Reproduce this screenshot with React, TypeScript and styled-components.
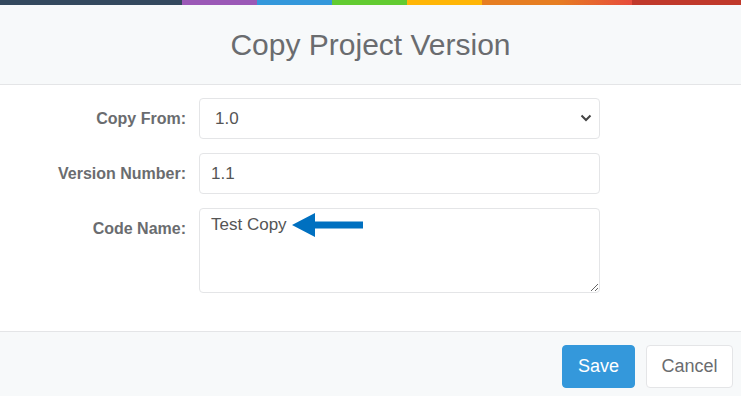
import * as React from "react";
import styled, { createGlobalStyle } from "styled-components";

const GlobalStyle = createGlobalStyle`
  html, body {
    margin: 0;
    padding: 0;
    background: #fff;
    font-family: "Liberation Sans", Arial, sans-serif;
  }
`;

const stripe = [
  { color: "#34495e", width: 182 },
  { color: "#9b59b6", width: 75 },
  { color: "#3498db", width: 75 },
  { color: "#62cb31", width: 75 },
  { color: "#ffb606", width: 75 },
  { color: "linear-gradient(to right, #e67e22 0%, #e67e22 50%, #e74c3c 100%)", width: 150 },
  { color: "#c0392b", width: 109 },
];

const Modal = styled.div`
  width: 741px;
  height: 396px;
  display: flex;
  flex-direction: column;
  overflow: hidden;
`;

const ColorBar = styled.div`
  display: flex;
  height: 5px;
`;

const ColorSegment = styled.div<{ $bg: string; $w: number }>`
  flex: 0 0 ${(p) => p.$w}px;
  background: ${(p) => p.$bg};
`;

const Header = styled.div`
  height: 79px;
  background: #f7f9fa;
  border-bottom: 1px solid #e4e5e7;
  display: flex;
  align-items: center;
  justify-content: center;
`;

const Title = styled.h4`
  margin: 0;
  font-size: 30px;
  font-weight: 400;
  color: #6a6c6f;
`;

const Body = styled.div`
  flex: 1;
  padding: 13px 0 0;
  display: flex;
  flex-direction: column;
  gap: 14px;
`;

const Row = styled.div`
  display: grid;
  grid-template-columns: 186px 401px;
  column-gap: 13px;
  align-items: start;
`;

const Label = styled.label`
  text-align: right;
  font-weight: 700;
  font-size: 16px;
  color: #6a6c6f;
  padding-top: 12px;
`;

const fieldBase = `
  box-sizing: border-box;
  width: 401px;
  border: 1px solid #e4e5e7;
  border-radius: 4px;
  background: #fff;
  font-family: "Liberation Sans", Arial, sans-serif;
  font-size: 17px;
  color: #555;
  outline: none;
`;

const SelectWrap = styled.div`
  position: relative;
  width: 401px;
`;

const Select = styled.select`
  ${fieldBase}
  height: 41px;
  padding: 0 12px 0 15px;
  appearance: none;
  -webkit-appearance: none;
`;

const Chevron = styled.svg`
  position: absolute;
  right: 7px;
  top: 15px;
  pointer-events: none;
`;

const Input = styled.input`
  ${fieldBase}
  height: 41px;
  padding: 0 11px;
`;

const TextWrap = styled.div`
  position: relative;
  width: 401px;
`;

const TextArea = styled.textarea`
  ${fieldBase}
  display: block;
  height: 85px;
  padding: 6px 11px;
  resize: vertical;
  line-height: 20px;
`;

const Arrow = styled.svg`
  position: absolute;
  left: 93px;
  top: 4px;
  pointer-events: none;
`;

const Footer = styled.div`
  height: 65px;
  box-sizing: border-box;
  background: #f7f9fa;
  border-top: 1px solid #e4e5e7;
  display: flex;
  align-items: flex-start;
  justify-content: flex-end;
  gap: 11px;
  padding: 13px 8px 0 0;
`;

const Button = styled.button<{ $primary?: boolean; $w: number }>`
  width: ${(p) => p.$w}px;
  height: 43px;
  padding: 0;
  border-radius: 4px;
  font-family: "Liberation Sans", Arial, sans-serif;
  font-size: 18px;
  cursor: pointer;
  border: 1px solid ${(p) => (p.$primary ? "#3498db" : "#e4e5e7")};
  background: ${(p) => (p.$primary ? "#3498db" : "#fff")};
  color: ${(p) => (p.$primary ? "#fff" : "#6a6c6f")};
`;

export default function App() {
  return (
    <Modal>
      <GlobalStyle />
      <ColorBar>
        {stripe.map((s, i) => (
          <ColorSegment key={i} $bg={s.color} $w={s.width} />
        ))}
      </ColorBar>
      <Header>
        <Title>Copy Project Version</Title>
      </Header>
      <Body>
        <Row>
          <Label>Copy From:</Label>
          <SelectWrap>
            <Select defaultValue="1.0">
              <option>1.0</option>
            </Select>
            <Chevron width="14" height="10" viewBox="0 0 14 10">
              <path d="M2.5 2.5 L7 7 L11.5 2.5" fill="none" stroke="#444" strokeWidth="2" />
            </Chevron>
          </SelectWrap>
        </Row>
        <Row>
          <Label>Version Number:</Label>
          <Input defaultValue="1.1" />
        </Row>
        <Row>
          <Label>Code Name:</Label>
          <TextWrap>
            <TextArea defaultValue="Test Copy" />
            <Arrow width="72" height="26" viewBox="0 0 72 26">
              <polygon points="0,13 23,1 23,9.5 71,9.5 71,16.5 23,16.5 23,25" fill="#0070c0" />
            </Arrow>
          </TextWrap>
        </Row>
      </Body>
      <Footer>
        <Button $primary $w={73}>Save</Button>
        <Button $w={87}>Cancel</Button>
      </Footer>
    </Modal>
  );
}
